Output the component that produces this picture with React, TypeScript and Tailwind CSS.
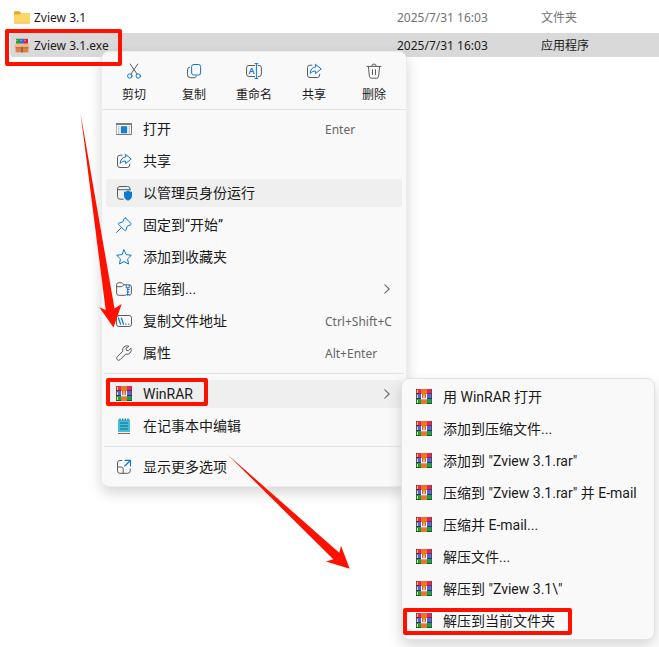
import type { ReactNode } from 'react';

const GRAY = '#5c5c5c';
const BLUE = '#0a78d4';

function Icon({ children }: { children: ReactNode }) {
  return (
    <svg viewBox="0 0 16 16" className="size-4 shrink-0" fill="none" strokeWidth="1" strokeLinecap="round" strokeLinejoin="round" aria-hidden="true">
      {children}
    </svg>
  );
}

function FolderIcon() {
  return (
    <Icon>
      <path d="M0 2.4A1.2 1.2 0 0 1 1.2 1.200h4.200l1.800 1.800h7.600a1.200 1.200 0 0 1 1.200 1.200v2H0z" fill="#e8a61f" />
      <path d="M0 5.200a1 1 0 0 1 1-1h4.800L7.400 3H15a1 1 0 0 1 1 1v8.400a1.200 1.200 0 0 1-1.200 1.200H1.200A1.200 1.200 0 0 1 0 12.400z" fill="#fcd667" />
      <path d="M.8 13.200h14.400" stroke="#f0bf45" strokeWidth="0.8" />
    </Icon>
  );
}

function PackageIcon() {
  return (
    <Icon>
      <path d="M2 .8h4v6H2z" fill="#1c9c45" />
      <path d="M6 .8h4v6H6z" fill="#3a66dc" />
      <path d="M10 .8h4v6h-4z" fill="#cf2450" />
      <path d="M3 1.800v1.400M7 1.800v1.400M11 1.800v1.400" stroke="#f7e36a" strokeWidth="0.9" strokeLinecap="butt" />
      <path d="M1.600 6.500h12.800v7.900H1.600z" fill="#d9824e" />
      <path d="M1.800 5.600h12.400L16 9.300H9.400L8 7.500 6.600 9.300H0z" fill="#f5b987" />
      <path d="M1.600 9.300h12.800v1H1.600z" fill="#b5622f" />
      <path d="M7.400 10h1.200v4.400H7.400z" fill="#8f4a24" />
    </Icon>
  );
}

function CutIcon() {
  return (
    <Icon>
      <path d="M4.200 1 11 11M11.800 1 5 11" stroke={GRAY} />
      <circle cx="3.800" cy="13" r="2.200" stroke={BLUE} />
      <circle cx="12.200" cy="13" r="2.200" stroke={BLUE} />
    </Icon>
  );
}

function CopyIcon() {
  return (
    <Icon>
      <path d="M3.600 4.200A2.400 2.400 0 0 0 1.500 6.600v5.200a2.900 2.900 0 0 0 2.900 2.900h3.800a2.400 2.400 0 0 0 2.200-1.400" stroke={GRAY} />
      <rect x="5.600" y="1.500" width="9" height="10.500" rx="2" stroke={BLUE} />
    </Icon>
  );
}

function RenameIcon() {
  return (
    <Icon>
      <path d="M8.600 2.500H3a2.400 2.400 0 0 0-2.400 2.400v6.200A2.400 2.400 0 0 0 3 13.500h5.600M12.200 2.500h.8a2.400 2.400 0 0 1 2.400 2.400v6.200a2.400 2.400 0 0 1-2.400 2.400h-.8" stroke={GRAY} />
      <path d="M8.900.6h3M8.900 15.400h3M10.400.6v14.800" stroke={BLUE} />
      <text x="5.600" y="11.200" textAnchor="middle" fontSize="9" fill={BLUE} className="font-semibold">A</text>
    </Icon>
  );
}

function ShareIcon() {
  return (
    <Icon>
      <path d="M6 2.200H4A2.500 2.500 0 0 0 1.500 4.700v7.300A2.500 2.500 0 0 0 4 14.500h7.200a2.500 2.500 0 0 0 2.500-2.500v-.8" stroke={GRAY} />
      <path d="M9.600 1.400 15.200 6l-5.600 4.600V8.100C7.400 8 5.600 8.700 4.200 10.500 4.400 6.800 6.200 4.200 9.600 3.900z" stroke={BLUE} />
    </Icon>
  );
}

function DeleteIcon() {
  return (
    <Icon>
      <path d="M1 3.400h14M5.800 3.200a2.200 2.200 0 0 1 4.400 0M2.400 3.600l1 9.700a2 2 0 0 0 2 1.900h5.200a2 2 0 0 0 2-1.900l1-9.700M6.500 6.600v5M9.500 6.600v5" stroke={GRAY} />
    </Icon>
  );
}

function OpenIcon() {
  return (
    <Icon>
      <path d="M.5 2.600h15v10.900H.5z" stroke="#7a7a7a" fill="#fff" strokeLinejoin="miter" />
      <path d="M.5 3.100h15" stroke="#7a7a7a" strokeWidth="1.600" />
      <path d="M2 5.800h1.400M2 7.900h1.400M2 10h1.400M2 12h1.400M12.600 5.800H14M12.600 7.900H14M12.600 10H14M12.600 12H14" stroke="#777" strokeWidth="0.8" strokeLinecap="butt" />
      <path d="M4.800 5.200h6.400v7.200H4.800z" fill="#1a7fd4" />
    </Icon>
  );
}

function AdminIcon() {
  return (
    <Icon>
      <path d="M7.200 14.200H4A2.500 2.500 0 0 1 1.500 11.700V4A2.500 2.500 0 0 1 4 1.500h7.600A2.500 2.500 0 0 1 14.100 4v1M1.500 4.700h12.600" stroke={GRAY} />
      <path d="M12 5.200c1.200 1 2.600 1.500 4 1.600v3.600c0 2.400-1.500 4.200-4 5.300-2.500-1.100-4-2.900-4-5.300V6.800c1.400-.1 2.800-.6 4-1.600z" fill={BLUE} />
    </Icon>
  );
}

function PinIcon() {
  return (
    <Icon>
      <path d="M.6 15.400 5 11" stroke={GRAY} />
      <path d="M9.700 1.200 15 6.400c.4.500.2 1.100-.3 1.300l-3.500 1.600-1.300 4c-.2.500-.7.600-1.100.3L2.500 7.300c-.4-.4-.2-1 .3-1.100l4-1.300 1.600-3.500c.3-.5.900-.6 1.300-.2z" stroke={BLUE} />
    </Icon>
  );
}

function StarIcon() {
  return (
    <Icon>
      <path d="m8 .9 2.200 4.700 5.100.7-3.700 3.600.9 5.100L8 12.600 3.500 15l.9-5.100L.7 6.300l5.100-.7z" stroke={BLUE} />
    </Icon>
  );
}

function ZipFolderIcon() {
  return (
    <Icon>
      <path d="M9.400 14.300H2.800A2.200 2.200 0 0 1 .6 12.100V3.900a2.200 2.200 0 0 1 2.200-2.200h2.400c.6 0 1 .2 1.400.6L8 3.800h5.200A2.200 2.200 0 0 1 15.400 6v6.100a2.200 2.200 0 0 1-2.200 2.200M.6 5.700h4.600c.5 0 .9-.2 1.200-.5l1.500-1.400" stroke={GRAY} />
      <path d="M10.200 4.200v2.600h3V4.200M11.700 6.800v7.500M11.700 8.600h1.500M11.700 11h1.500M10.400 13.600H13" stroke={BLUE} />
    </Icon>
  );
}

function CopyPathIcon() {
  return (
    <Icon>
      <rect x=".6" y="2.500" width="14.900" height="11" rx="2.200" stroke={GRAY} />
      <path d="m2.400 5 2.200 6.200M5.400 5l2.200 6.200M9.800 11.200h.3M12.600 11.200h.3" stroke={BLUE} strokeWidth="1.200" />
    </Icon>
  );
}

function WrenchIcon() {
  return (
    <Icon>
      <path d="M12.700 1.100a4.300 4.300 0 0 0-5.900 5.100L1.300 11.700a2 2 0 0 0 0 2.900 2 2 0 0 0 2.900 0l5.500-5.500a4.300 4.300 0 0 0 5.200-5.900l-2.600 2.600-1.800-.4-.4-1.800z" stroke={GRAY} />
    </Icon>
  );
}

function NotepadIcon() {
  return (
    <Icon>
      <path d="M2 1.600h12v13H2z" fill="#42bfe0" />
      <path d="M2 15h12v1H2z" fill="#b0622a" />
      <path d="M2 14h12v1H2z" fill="#e8f3f5" />
      <path d="M4 5h8M4 8h8M4 11h8" stroke="#14657f" strokeWidth="1" strokeLinecap="butt" />
      <path d="M4 .4v2M6.700.4v2M9.300.4v2M12 .4v2" stroke="#1f6a80" strokeWidth="1.100" strokeLinecap="butt" />
    </Icon>
  );
}

function MoreIcon() {
  return (
    <Icon>
      <path d="M5.800 1.500H4A2.500 2.500 0 0 0 1.500 4v7.800A2.500 2.500 0 0 0 4 14.300h7.700a2.500 2.500 0 0 0 2.500-2.500V10M1.500 8h3.700a2 2 0 0 1 2 2v4.300" stroke={GRAY} />
      <path d="M9 1.300h5.500v5.500M14.300 1.500 8.800 7" stroke={BLUE} strokeWidth="1.200" />
    </Icon>
  );
}

function WinRarIcon() {
  return (
    <Icon>
      <path d="M0 0h16v5H0z" fill="#dc2c5c" />
      <path d="M0 4h16v1H0z" fill="#8a1f49" />
      <path d="M0 5h16v5H0z" fill="#5d5fc9" />
      <path d="M0 9h16v1H0z" fill="#38307c" />
      <path d="M0 10h16v5H0z" fill="#1ba04a" />
      <path d="M0 14h16v1H0z" fill="#115c2c" />
      <path d="M1.500 1v3M1.500 6v3M1.500 11v3" stroke="#f9e04f" strokeLinecap="butt" />
      <path d="M0 0h1v15H0zM15 0h1v15h-1z" fill="#251a3d" fillOpacity="0.25" />
      <path d="M5 0h6v15H5z" fill="#ee7420" />
      <path d="M5 5h6v6H5z" fill="#a8481b" />
      <path d="M7 5h2v3H7z" fill="#f59b3a" />
      <path d="M5.600 5v4.900h4.800V5M8 7.500v2.400" stroke="#fff" strokeWidth="1.200" strokeLinecap="butt" strokeLinejoin="miter" />
    </Icon>
  );
}

function Chevron() {
  return (
    <svg viewBox="0 0 6 10" className="mr-3 h-[10px] w-[6px] shrink-0" fill="none" stroke="#6b6b6b" strokeWidth="1.100" strokeLinecap="round" strokeLinejoin="round" aria-hidden="true">
      <path d="m.8.800 4.400 4.200L.8 9.200" />
    </svg>
  );
}

const files = [
  { name: 'Zview 3.1', date: '2025/7/31 16:03', type: '文件夹', icon: <FolderIcon />, selected: false },
  { name: 'Zview 3.1.exe', date: '2025/7/31 16:03', type: '应用程序', icon: <PackageIcon />, selected: true },
];

const actions = [
  { label: '剪切', icon: <CutIcon /> },
  { label: '复制', icon: <CopyIcon /> },
  { label: '重命名', icon: <RenameIcon /> },
  { label: '共享', icon: <ShareIcon /> },
  { label: '删除', icon: <DeleteIcon /> },
];

interface Item {
  label: string;
  icon: ReactNode;
  shortcut?: string;
  submenu?: boolean;
  active?: boolean;
}

const groups: Item[][] = [
  [
    { label: '打开', icon: <OpenIcon />, shortcut: 'Enter' },
    { label: '共享', icon: <ShareIcon /> },
    { label: '以管理员身份运行', icon: <AdminIcon />, active: true },
    { label: '固定到“开始”', icon: <PinIcon /> },
    { label: '添加到收藏夹', icon: <StarIcon /> },
    { label: '压缩到...', icon: <ZipFolderIcon />, submenu: true },
    { label: '复制文件地址', icon: <CopyPathIcon />, shortcut: 'Ctrl+Shift+C' },
    { label: '属性', icon: <WrenchIcon />, shortcut: 'Alt+Enter' },
  ],
  [
    { label: 'WinRAR', icon: <WinRarIcon />, submenu: true, active: true },
    { label: '在记事本中编辑', icon: <NotepadIcon /> },
  ],
  [{ label: '显示更多选项', icon: <MoreIcon /> }],
];

const rarItems = [
  '用 WinRAR 打开',
  '添加到压缩文件...',
  '添加到 "Zview 3.1.rar"',
  '压缩到 "Zview 3.1.rar" 并 E-mail',
  '压缩并 E-mail...',
  '解压文件...',
  '解压到 "Zview 3.1\\"',
  '解压到当前文件夹',
];

function MenuItem({ label, icon, shortcut, submenu, active }: Item) {
  return (
    <button
      type="button"
      className={`flex h-7 items-center gap-[11px] rounded pl-[10px] text-left text-sm ${active ? 'bg-[#efefef]' : ''}`}
    >
      {icon}
      <span className="grow font-[Roboto,'Noto_Sans_CJK_SC',sans-serif] whitespace-nowrap">{label}</span>
      {shortcut && <span className="w-[77px] pt-px whitespace-nowrap text-xs text-[#666]">{shortcut}</span>}
      {submenu && <Chevron />}
    </button>
  );
}

function FileTable() {
  return (
    <table className="w-full table-fixed border-separate border-spacing-x-0 border-spacing-y-1 text-left text-xs">
      <colgroup>
        <col className="w-[387px]" />
        <col className="w-36" />
        <col />
      </colgroup>
      <tbody>
        {files.map((file) => (
          <tr key={file.name} className={`h-6 ${file.selected ? 'bg-[#d9d9d9] text-[#1a1a1a]' : 'text-[#737373]'}`}>
            <td className="rounded-l p-0 pt-px pl-1">
              <span className="flex items-center gap-1 text-[#1a1a1a]">
                {file.icon}
                {file.name}
              </span>
            </td>
            <td className="p-0 pt-px">{file.date}</td>
            <td className="p-0 pt-px">{file.type}</td>
          </tr>
        ))}
      </tbody>
    </table>
  );
}

function ContextMenu() {
  return (
    <div className="absolute top-[51px] left-[101px] w-[306px] rounded-lg border border-[#ececec] bg-[#f9f9f9] pb-[5px] shadow-[0_6px_14px_rgba(0,0,0,0.16)]">
      <div className="flex border-b border-[#e5e5e5] px-[2px] pt-[11px] pb-[6px]">
        {actions.map((action) => (
          <button key={action.label} type="button" className="flex flex-1 flex-col items-center gap-2 text-xs">
            {action.icon}
            {action.label}
          </button>
        ))}
      </div>
      <div className="px-[2px] pt-[5px]">
        {groups.map((group, index) => (
          <div key={group[0].label}>
            {index > 0 && <hr className="my-[6px] border-[#e5e5e5]" />}
            <div className="flex flex-col gap-1 px-[2px]">
              {group.map((item) => (
                <MenuItem key={item.label} {...item} />
              ))}
            </div>
          </div>
        ))}
      </div>
    </div>
  );
}

function RarMenu() {
  return (
    <div className="absolute top-[378px] left-[401px] flex w-[254px] flex-col gap-1 rounded-lg border border-[#e2e2e2] bg-[#f9f9f9] p-1 shadow-[0_6px_14px_rgba(0,0,0,0.16)]">
      {rarItems.map((label) => (
        <MenuItem key={label} label={label} icon={<WinRarIcon />} />
      ))}
    </div>
  );
}

function Annotations() {
  return (
    <div className="pointer-events-none absolute inset-0">
      <div className="absolute top-[29px] left-[5px] h-[37px] w-[117px] rounded-xs border-4 border-[#ff1100]" />
      <div className="absolute top-[378px] left-[106px] h-7 w-[102px] rounded-xs border-4 border-[#ff1100]" />
      <div className="absolute top-[608px] left-[403px] h-[27px] w-[169px] rounded-xs border-4 border-[#ff1100]" />
      <svg className="absolute top-0 left-0" width="360" height="580" fill="#ff1100" aria-hidden="true">
        <path d="M80.500 113 114.500 308.500 121.700 304 113.500 327.600 99.300 307.300 105.700 310z" />
        <path d="M227.500 454.500 339.300 552.700 341 545.700 349.700 568.700 326 561.500 333.300 559.300z" />
      </svg>
    </div>
  );
}

export default function App() {
  return (
    <main
      lang="zh-CN"
      className="relative min-h-screen overflow-hidden bg-white pt-px pl-[10px] font-['Noto_Sans','Noto_Sans_CJK_SC',sans-serif] text-[#1a1a1a]"
    >
      <FileTable />
      <ContextMenu />
      <RarMenu />
      <Annotations />
    </main>
  );
}
